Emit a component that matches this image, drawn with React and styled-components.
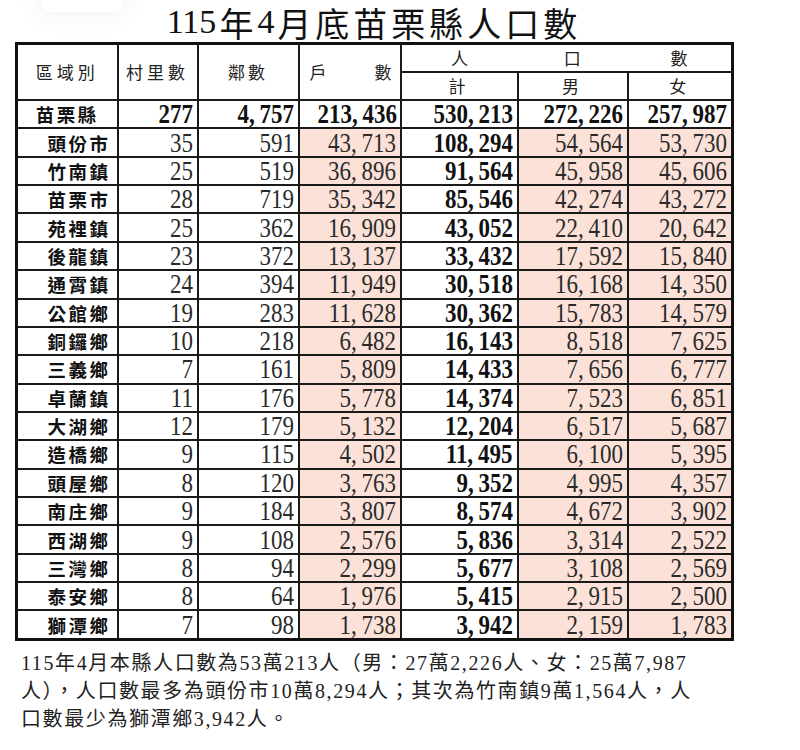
import React from "react";
import styled, { createGlobalStyle } from "styled-components";

const GlobalStyle = createGlobalStyle`
  html, body {
    margin: 0;
    padding: 0;
    background: #ffffff;
  }
  body {
    font-family: "Liberation Serif", "Noto Sans CJK TC", serif;
    color: #111;
  }
`;

const Page = styled.div`
  position: relative;
  width: 800px;
  height: 750px;
  overflow: hidden;
  padding-left: 15px;
  box-sizing: border-box;
`;

// faint rounded shape peeking in from the top edge of the photo
const Ghost = styled.div`
  position: absolute;
  top: -14px;
  left: 42px;
  width: 80px;
  height: 26px;
  border-radius: 9px;
  background: #ffffff;
  box-shadow: 0 0 22px 8px rgba(0, 0, 0, 0.04);
`;

const Title = styled.h1`
  width: 718px;
  margin: 0;
  height: 42px;
  display: flex;
  align-items: center;
  justify-content: center;
  font-family: "Liberation Serif", "Noto Sans CJK TC", serif;
  font-weight: 400;
  font-size: 34px;
  letter-spacing: 4px;
  color: #111;
  padding-top: 2px;
  box-sizing: border-box;
`;

const TitleNum = styled.span`
  letter-spacing: 0;
  margin-right: 3px;
`;

const Table = styled.table`
  border-collapse: collapse;
  table-layout: fixed;
  width: 718px;
  border: 3px solid #111;
`;

const Cell = styled.td`
  border: 2px solid #1a1a1a;
  padding: 0;
  height: 26.37px;
  line-height: 0;
  font-size: 0;
  box-sizing: content-box;
  background: ${({ $pink }) => ($pink ? "#fbe1d7" : "#ffffff")};
  text-align: ${({ $align }) => $align || "right"};
  padding-right: ${({ $align }) => ($align === "center" ? "0" : "4px")};
  vertical-align: middle;
  white-space: nowrap;
`;

const HeadCell = styled.th`
  border: 2px solid #1a1a1a;
  padding: 0;
  height: 26px;
  line-height: 24px;
  font-family: "Noto Sans CJK TC", sans-serif;
  font-weight: 400;
  font-size: 17px;
  letter-spacing: ${({ $spacing }) => $spacing || "4px"};
  text-align: center;
  color: #222;
  background: #ffffff;
`;

const Spread = styled.div`
  display: flex;
  justify-content: space-between;
  padding: 0 8px 0 10px;
  letter-spacing: 0;
`;

const PopHead = styled.div`
  display: grid;
  grid-template-columns: 117fr 110fr 105fr;
  text-align: center;
  letter-spacing: 0;
`;

const Name = styled.span`
  display: inline-block;
  vertical-align: middle;
  font-family: "Noto Sans CJK TC", sans-serif;
  font-weight: 700;
  font-size: 18.5px;
  line-height: 24px;
  letter-spacing: 2.5px;
  color: #111;
  margin-right: ${({ $center }) => ($center ? "0" : "2px")};
`;

const NumText = styled.span`
  display: inline-block;
  vertical-align: middle;
  font-family: "Liberation Serif", serif;
  font-size: 28px;
  line-height: 24px;
  font-weight: ${({ $bold }) => ($bold ? 700 : 400)};
  color: ${({ $bold }) => ($bold ? "#111" : "#2a2a2a")};
  transform: scaleX(0.82);
  transform-origin: right center;
`;

const Comma = styled.span`
  margin-right: 6px;
`;

const Note = styled.p`
  margin: 8px 0 0 6px;
  font-family: "Liberation Serif", "Noto Sans CJK TC", serif;
  font-size: 20px;
  line-height: 28px;
  letter-spacing: 1.6px;
  color: #222;
  white-space: nowrap;
`;

const total = ["苗栗縣", 277, 4757, 213436, 530213, 272226, 257987];

const rows = [
  ["頭份市", 35, 591, 43713, 108294, 54564, 53730],
  ["竹南鎮", 25, 519, 36896, 91564, 45958, 45606],
  ["苗栗市", 28, 719, 35342, 85546, 42274, 43272],
  ["苑裡鎮", 25, 362, 16909, 43052, 22410, 20642],
  ["後龍鎮", 23, 372, 13137, 33432, 17592, 15840],
  ["通霄鎮", 24, 394, 11949, 30518, 16168, 14350],
  ["公館鄉", 19, 283, 11628, 30362, 15783, 14579],
  ["銅鑼鄉", 10, 218, 6482, 16143, 8518, 7625],
  ["三義鄉", 7, 161, 5809, 14433, 7656, 6777],
  ["卓蘭鎮", 11, 176, 5778, 14374, 7523, 6851],
  ["大湖鄉", 12, 179, 5132, 12204, 6517, 5687],
  ["造橋鄉", 9, 115, 4502, 11495, 6100, 5395],
  ["頭屋鄉", 8, 120, 3763, 9352, 4995, 4357],
  ["南庄鄉", 9, 184, 3807, 8574, 4672, 3902],
  ["西湖鄉", 9, 108, 2576, 5836, 3314, 2522],
  ["三灣鄉", 8, 94, 2299, 5677, 3108, 2569],
  ["泰安鄉", 8, 64, 1976, 5415, 2915, 2500],
  ["獅潭鄉", 7, 98, 1738, 3942, 2159, 1783],
];

const colWidths = [101, 80, 101, 102, 117, 110, 105];

const Num = ({ value, bold }) => {
  const parts = value.toLocaleString("en-US").split(",");
  return (
    <NumText $bold={bold}>
      {parts.map((p, i) => (
        <React.Fragment key={i}>
          {p}
          {i < parts.length - 1 && <Comma>,</Comma>}
        </React.Fragment>
      ))}
    </NumText>
  );
};

const Row = ({ row, isTotal }) => {
  const [name, ...nums] = row;
  return (
    <tr>
      <Cell $align={isTotal ? "center" : "right"}>
        <Name $center={isTotal}>{name}</Name>
      </Cell>
      {nums.map((n, i) => {
        // i: 0 村里, 1 鄰, 2 戶, 3 計, 4 男, 5 女
        const pink = !isTotal && (i === 2 || i === 4 || i === 5);
        return (
          <Cell key={i} $pink={pink}>
            <Num value={n} bold={isTotal || i === 3} />
          </Cell>
        );
      })}
    </tr>
  );
};

export default function App() {
  return (
    <>
      <GlobalStyle />
      <Page>
        <Ghost />
        <Title>
          <TitleNum>115</TitleNum>年<TitleNum>4</TitleNum>月底苗栗縣人口數
        </Title>
        <Table>
          <colgroup>
            {colWidths.map((w, i) => (
              <col key={i} style={{ width: w }} />
            ))}
          </colgroup>
          <thead>
            <tr>
              <HeadCell rowSpan={2}>區域別</HeadCell>
              <HeadCell rowSpan={2}>村里數</HeadCell>
              <HeadCell rowSpan={2} $spacing="3px">鄰數</HeadCell>
              <HeadCell rowSpan={2}>
                <Spread>
                  <span>戶</span>
                  <span>數</span>
                </Spread>
              </HeadCell>
              <HeadCell colSpan={3}>
                <PopHead>
                  <span>人</span>
                  <span>口</span>
                  <span>數</span>
                </PopHead>
              </HeadCell>
            </tr>
            <tr>
              <HeadCell>計</HeadCell>
              <HeadCell>男</HeadCell>
              <HeadCell>女</HeadCell>
            </tr>
          </thead>
          <tbody>
            <Row row={total} isTotal />
            {rows.map((r) => (
              <Row key={r[0]} row={r} />
            ))}
          </tbody>
        </Table>
        <Note>
          115年4月本縣人口數為53萬213人（男：27萬2,226人、女：25萬7,987
          <br />
          人），人口數最多為頭份市10萬8,294人；其次為竹南鎮9萬1,564人，人
          <br />
          口數最少為獅潭鄉3,942人。
        </Note>
      </Page>
    </>
  );
}
